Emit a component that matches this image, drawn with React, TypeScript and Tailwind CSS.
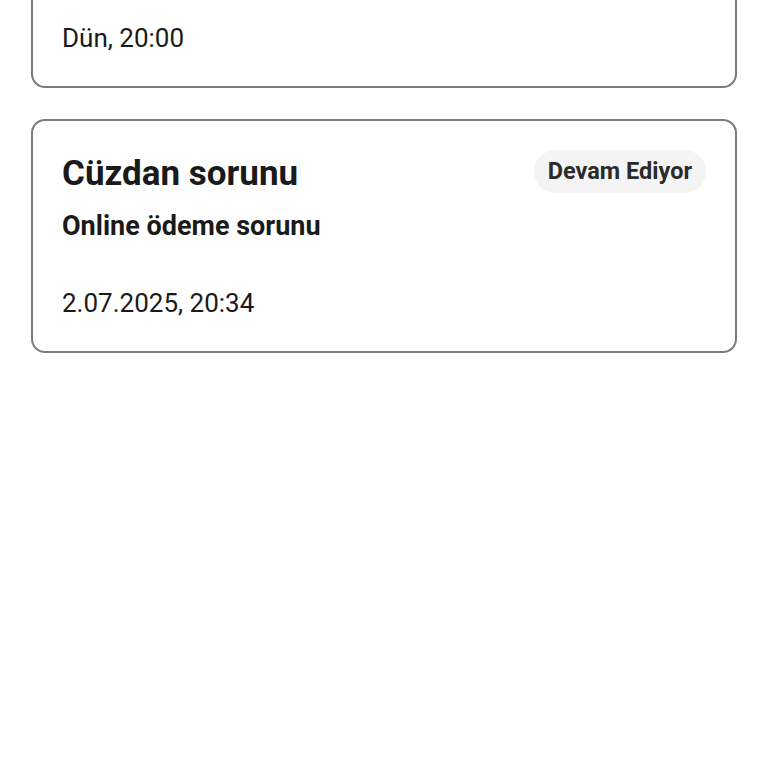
import React from "react";

type Ticket = {
  id: number;
  title: string;
  subtitle: string;
  status: string;
  date: string;
};

const tickets: Ticket[] = [
  { id: 1, title: "Kart sorunu", subtitle: "Kart bloke oldu", status: "Devam Ediyor", date: "Dün, 20:00" },
  { id: 2, title: "Cüzdan sorunu", subtitle: "Online ödeme sorunu", status: "Devam Ediyor", date: "2.07.2025, 20:34" },
];

function TicketCard({ ticket }: { ticket: Ticket }) {
  return (
    <div className="rounded-[14px] border-2 border-[#7b7b7b] bg-white px-[29px] pt-[29px] pb-[32px] text-[#1a1a1a]">
      <div className="flex items-start justify-between">
        <h2 className="mt-[4px] text-[35px] leading-[40px] font-bold">{ticket.title}</h2>
        <span className="flex h-[43px] items-center rounded-full bg-[#f4f4f4] px-[14px] text-[23.5px] font-bold text-[#2b2b2b]">
          {ticket.status}
        </span>
      </div>
      <p className="mt-[16px] text-[27px] leading-[32px] font-bold">{ticket.subtitle}</p>
      <p className="mt-[45px] text-[26px] leading-[32px]">{ticket.date}</p>
    </div>
  );
}

export default function App() {
  return (
    <div className="min-h-[768px] overflow-hidden bg-white" style={{ fontFamily: "Roboto, 'Noto Sans', sans-serif" }}>
      <div className="-mt-[146px] flex flex-col gap-[31px] px-[31px]">
        {tickets.map((t) => (
          <TicketCard key={t.id} ticket={t} />
        ))}
      </div>
    </div>
  );
}
